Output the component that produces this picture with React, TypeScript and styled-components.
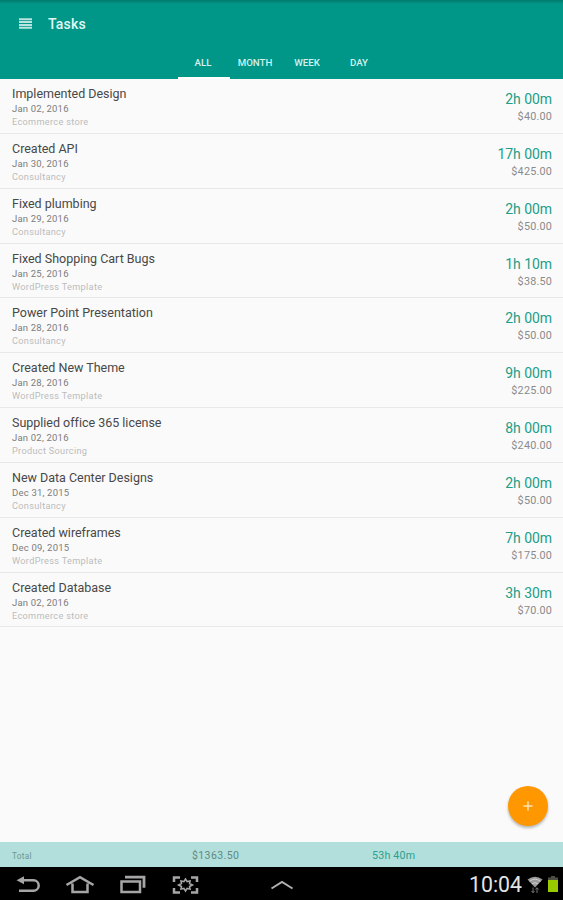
import React from "react";
import styled, { createGlobalStyle } from "styled-components";

const Global = createGlobalStyle`
  * { box-sizing: border-box; }
  body { margin: 0; background: #fafafa; font-family: Roboto, "Liberation Sans", sans-serif; }
`;

const Screen = styled.div`
  width: 563px;
  height: 900px;
  display: flex;
  flex-direction: column;
  overflow: hidden;
  background: #fafafa;
`;

const Header = styled.header`
  height: 79px;
  flex: none;
  display: flex;
  flex-direction: column;
  justify-content: space-between;
  background: linear-gradient(#00796b 0, #008577 1.5px, #009688 4px);
`;

const Toolbar = styled.div`
  height: 47px;
  display: flex;
  align-items: center;
  padding-left: 19px;
  gap: 16px;
`;

const Heading = styled.h1`
  margin: 0;
  color: #e0f8f4;
  font-size: 14px;
  line-height: 20px;
  font-weight: 500;
  letter-spacing: 0.2px;
`;

const Tabs = styled.nav`
  display: flex;
  justify-content: center;
  height: 32px;
`;

const Tab = styled.button<{ $active?: boolean }>`
  width: 52px;
  padding: 1px 1px 0 0;
  border: 0;
  border-bottom: 2px solid ${(p) => (p.$active ? "#ffffff" : "transparent")};
  background: none;
  color: #d2f1ed;
  font: 500 9.7px/29px Roboto, sans-serif;
  text-align: center;
`;

const List = styled.main`
  flex: 1;
`;

const Row = styled.article`
  height: 54.85px;
  display: flex;
  justify-content: space-between;
  padding: 7px 11px 0 12px;
  border-bottom: 1px solid #e8e8e8;
`;

const Details = styled.div`
  display: flex;
  flex-direction: column;
`;

const Amounts = styled(Details)`
  align-items: flex-end;
  padding-top: 5px;
`;

const Name = styled.span`
  color: #484848;
  font-size: 12.5px;
  line-height: 16px;
  letter-spacing: -0.01px;
`;

const DateText = styled.span`
  color: #7c7c7c;
  font-size: 9.5px;
  line-height: 14px;
  letter-spacing: 0.2px;
`;

const Project = styled.span`
  color: #bcbcbc;
  font-size: 9.2px;
  line-height: 12px;
  letter-spacing: 0.3px;
`;

const Duration = styled.span`
  color: #219e87;
  font-size: 14px;
  line-height: 17px;
  letter-spacing: -0.05px;
`;

const Price = styled.span`
  color: #8a8a8a;
  font-size: 10.8px;
  line-height: 17px;
  letter-spacing: 0.2px;
`;

const Summary = styled.footer`
  height: 25px;
  flex: none;
  display: grid;
  grid-template-columns: 180px 180px 1fr;
  align-items: center;
  padding: 1px 0 0 12px;
  background: #b2dfdb;
`;

const TotalLabel = styled.span`
  color: #6c9691;
  font-size: 8.2px;
  letter-spacing: 0.3px;
  padding-top: 2px;
`;

const TotalPrice = styled.span`
  color: #5e8984;
  font-size: 10.5px;
  letter-spacing: 0.4px;
`;

const TotalTime = styled.span`
  color: #2a9f90;
  font-size: 10.7px;
  letter-spacing: 0.2px;
`;

const SystemBar = styled.div`
  height: 33px;
  flex: none;
  display: grid;
  grid-template-columns: 1fr auto 1fr;
  align-items: center;
  padding: 2px 5px 0;
  background: #000;
`;

const NavKeys = styled.div`
  display: flex;
  align-items: center;
  gap: 25px;
  padding-left: 10px;
`;

const Status = styled.div`
  display: flex;
  align-items: center;
  justify-content: flex-end;
  gap: 5px;
`;

const Clock = styled.time`
  color: #e4e4e4;
  font-size: 21.3px;
  line-height: 30px;
`;

const AddButton = styled.button`
  position: fixed;
  left: 508px;
  top: 786px;
  width: 40px;
  height: 40px;
  padding: 0;
  border: 0;
  border-radius: 50%;
  display: grid;
  place-items: center;
  background: #ff9800;
  box-shadow: 0 2px 3px rgba(0, 0, 0, 0.28);
`;

const tasks = [
  ["Implemented Design", "Jan 02, 2016", "Ecommerce store", "2h 00m", "$40.00"],
  ["Created API", "Jan 30, 2016", "Consultancy", "17h 00m", "$425.00"],
  ["Fixed plumbing", "Jan 29, 2016", "Consultancy", "2h 00m", "$50.00"],
  ["Fixed Shopping Cart Bugs", "Jan 25, 2016", "WordPress Template", "1h 10m", "$38.50"],
  ["Power Point Presentation", "Jan 28, 2016", "Consultancy", "2h 00m", "$50.00"],
  ["Created New Theme", "Jan 28, 2016", "WordPress Template", "9h 00m", "$225.00"],
  ["Supplied office 365 license", "Jan 02, 2016", "Product Sourcing", "8h 00m", "$240.00"],
  ["New Data Center Designs", "Dec 31, 2015", "Consultancy", "2h 00m", "$50.00"],
  ["Created wireframes", "Dec 09, 2015", "WordPress Template", "7h 00m", "$175.00"],
  ["Created Database", "Jan 02, 2016", "Ecommerce store", "3h 30m", "$70.00"],
];

const MenuIcon = () => (
  <svg width="13" height="11" viewBox="0 0 13 11" stroke="#b9e3de" strokeWidth="2">
    <path d="M0 1.2h13M0 4.1h13M0 6.9h13M0 9.8h13" />
  </svg>
);

const BackIcon = () => (
  <svg width="25" height="20" viewBox="0 0 25 20" fill="none" stroke="#a6a6a6" strokeWidth="2.5">
    <path d="M6 5.3h12.5a4.9 4.9 0 0 1 0 10.4H4" />
    <path d="M9 1.3v8L1.500 5.3z" fill="#a6a6a6" stroke="none" />
  </svg>
);

const HomeIcon = () => (
  <svg width="30" height="20" viewBox="0 0 30 20" fill="none" stroke="#a6a6a6" strokeWidth="2.5">
    <path d="M1.5 10 15 2.2 28.5 10M7.5 8.5v8.400h15V8.5" />
  </svg>
);

const RecentIcon = () => (
  <svg width="26" height="20" viewBox="0 0 26 20" fill="none" stroke="#a6a6a6" strokeWidth="2.5">
    <path d="M1.5 6.5h18.5v10.5H1.5z" />
    <path d="M5 2.2h19v10.5" strokeWidth="2.8" />
  </svg>
);

const CaptureIcon = () => (
  <svg width="28" height="20" viewBox="0 0 28 20" fill="none" stroke="#a6a6a6" strokeWidth="2.5">
    <path d="M3 7V2.5h6M20 2.5h6V7M26 13v4.5h-6M9 17.5H3V13" />
    <path d="m14.5 4 1.6 2.6 3-.6-.6 2.5 3 1.5-3 1.5.6 2.5-3-.6-1.6 2.6-1.6-2.6-3 .6.6-2.5-3-1.5 3-1.5-.6-2.5 3 .6z" strokeWidth="1.5" />
  </svg>
);

const ChevronIcon = () => (
  <svg width="24" height="12" viewBox="0 0 24 12" fill="none" stroke="#b0b0b0" strokeWidth="2">
    <path d="M1.5 9.5 12 3l10.5 6.5" />
  </svg>
);

const WifiIcon = () => (
  <svg width="16" height="19" viewBox="0 0 16 19" fill="none">
    <path d="M0.5 4.5Q8-1.2 15.5 4.5L8 12.5z" fill="#9b9b9b" />
    <path d="M2.5 6.3Q8 2 13.5 6.3M5 8.8Q8 6.5 11 8.8" stroke="#cecece" strokeWidth="1" />
    <path d="M6 12.5v5M4.5 16 6 17.8 7.5 16M10 18v-5M8.5 14.5 10 12.7l1.5 1.8" stroke="#747474" />
  </svg>
);

const BatteryIcon = () => (
  <svg width="10" height="17" viewBox="0 0 10 17">
    <path d="M3 0h4v1.5h3V5H0V1.5h3z" fill="#4b4f43" />
    <path d="M0 4h10v12H0z" fill="#99cc00" />
  </svg>
);

export default function App() {
  return (
    <Screen>
      <Global />
      <Header>
        <Toolbar>
          <MenuIcon />
          <Heading>Tasks</Heading>
        </Toolbar>
        <Tabs>
          <Tab $active>ALL</Tab>
          <Tab>MONTH</Tab>
          <Tab>WEEK</Tab>
          <Tab>DAY</Tab>
        </Tabs>
      </Header>
      <List>
        {tasks.map(([name, date, project, duration, price]) => (
          <Row key={name}>
            <Details>
              <Name>{name}</Name>
              <DateText>{date}</DateText>
              <Project>{project}</Project>
            </Details>
            <Amounts>
              <Duration>{duration}</Duration>
              <Price>{price}</Price>
            </Amounts>
          </Row>
        ))}
      </List>
      <Summary>
        <TotalLabel>Total</TotalLabel>
        <TotalPrice>$1363.50</TotalPrice>
        <TotalTime>53h 40m</TotalTime>
      </Summary>
      <SystemBar>
        <NavKeys>
          <BackIcon />
          <HomeIcon />
          <RecentIcon />
          <CaptureIcon />
        </NavKeys>
        <ChevronIcon />
        <Status>
          <Clock>10:04</Clock>
          <WifiIcon />
          <BatteryIcon />
        </Status>
      </SystemBar>
      <AddButton aria-label="Add task">
        <svg width="10" height="10" viewBox="0 0 10 10" stroke="#ffe3b5" strokeWidth="1.5">
          <path d="M5 .5v9M.5 5h9" />
        </svg>
      </AddButton>
    </Screen>
  );
}
